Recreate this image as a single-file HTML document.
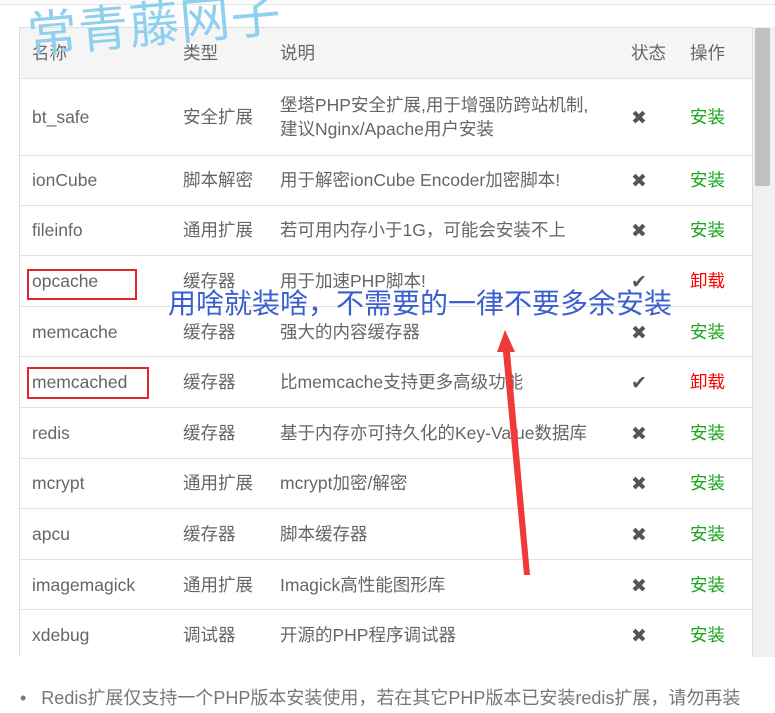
<!DOCTYPE html>
<html><head><meta charset="utf-8"><style>
*{margin:0;padding:0;box-sizing:border-box}
body{width:775px;height:713px;overflow:hidden;background:#fff;font-family:"Liberation Sans","Noto Sans CJK SC",sans-serif;color:#666;position:relative}
.top{position:absolute;left:0;top:0;width:775px;height:5px;border-bottom:1px solid #e6e6e6;background:#fafafa}
.wrap{position:absolute;left:19px;top:27px;width:734px;height:630px;border:1px solid #ddd;border-bottom:none;overflow:hidden}
.row{position:absolute;left:0;width:734px;border-bottom:1px solid #e2e2e2;font-size:17.5px}
.row span{position:absolute;top:50%;transform:translateY(-50%);line-height:24px;white-space:nowrap}
.c1{left:12px}.c2{left:163px}.c3{left:260px}.c4{left:611px;font-size:19px;color:#555;margin-top:2px}.c5{left:670px}
.g{color:#1aa51a}.r{color:#f00}
.hd{background:#f5f5f5}
.sb{position:absolute;left:753px;top:27px;width:22px;height:630px;background:#f1f1f1}
.th{position:absolute;left:755px;top:28px;width:15px;height:158px;background:#c1c1c1;border-radius:2px}
.wm{position:absolute;left:30px;top:8px;font-size:50px;line-height:56px;color:#8fd0ee;transform:rotate(-5deg);transform-origin:left bottom;letter-spacing:1px}
.box{position:absolute;border:2px solid #e0262b}
.note{position:absolute;left:168px;top:286px;font-size:28px;line-height:36px;color:#3b5fcf;white-space:nowrap}
.foot{position:absolute;left:20px;top:685px;font-size:18px;line-height:26px;color:#777;white-space:nowrap}
</style></head><body>
<div class="top"></div>
<div class="wrap">
<div class="row hd" style="top:0;height:51px"><span class="c1">名称</span><span class="c2">类型</span><span class="c3">说明</span><span class="c4" style="font-size:17.5px;color:#666;margin-top:0">状态</span><span class="c5" style="color:#666">操作</span></div>
<div class="row" style="top:51px;height:77px"><span class="c1">bt_safe</span><span class="c2">安全扩展</span><span class="c3">堡塔PHP安全扩展,用于增强防跨站机制,<br>建议Nginx/Apache用户安装</span><span class="c4">✖</span><span class="c5 g">安装</span></div>
</div>
<div class="wrap" style="border-top:none;top:155px;height:502px">
<div id="rows"></div>
</div>
<script>
var d=[["ionCube","脚本解密","用于解密ionCube Encoder加密脚本!",0],["fileinfo","通用扩展","若可用内存小于1G，可能会安装不上",0],["opcache","缓存器","用于加速PHP脚本!",1],["memcache","缓存器","强大的内容缓存器",0],["memcached","缓存器","比memcache支持更多高级功能",1],["redis","缓存器","基于内存亦可持久化的Key-Value数据库",0],["mcrypt","通用扩展","mcrypt加密/解密",0],["apcu","缓存器","脚本缓存器",0],["imagemagick","通用扩展","Imagick高性能图形库",0],["xdebug","调试器","开源的PHP程序调试器",0]];
var h="";d.forEach(function(r,i){h+='<div class="row" style="top:'+(i*50.6)+'px;height:50.6px"><span class="c1">'+r[0]+'</span><span class="c2">'+r[1]+'</span><span class="c3">'+r[2]+'</span><span class="c4">'+(r[3]?'✔':'✖')+'</span><span class="c5 '+(r[3]?'r':'g')+'">'+(r[3]?'卸载':'安装')+'</span></div>'});
document.getElementById('rows').innerHTML=h;
</script>
<div class="sb"></div><div class="th"></div>
<div class="wm">常青藤网子</div>
<div class="box" style="left:27px;top:269px;width:110px;height:31px"></div>
<div class="box" style="left:27px;top:367px;width:122px;height:32px"></div>
<div class="note">用啥就装啥，不需要的一律不要多余安装</div>
<svg style="position:absolute;left:0;top:0" width="775" height="713"><polygon points="505,330 515,352 510,352 530,575 524,575 503,352 497,352" fill="#f03a3a"/></svg>
<div class="foot">•&nbsp;&nbsp;&nbsp;Redis扩展仅支持一个PHP版本安装使用，若在其它PHP版本已安装redis扩展，请勿再装</div>
</body></html>
